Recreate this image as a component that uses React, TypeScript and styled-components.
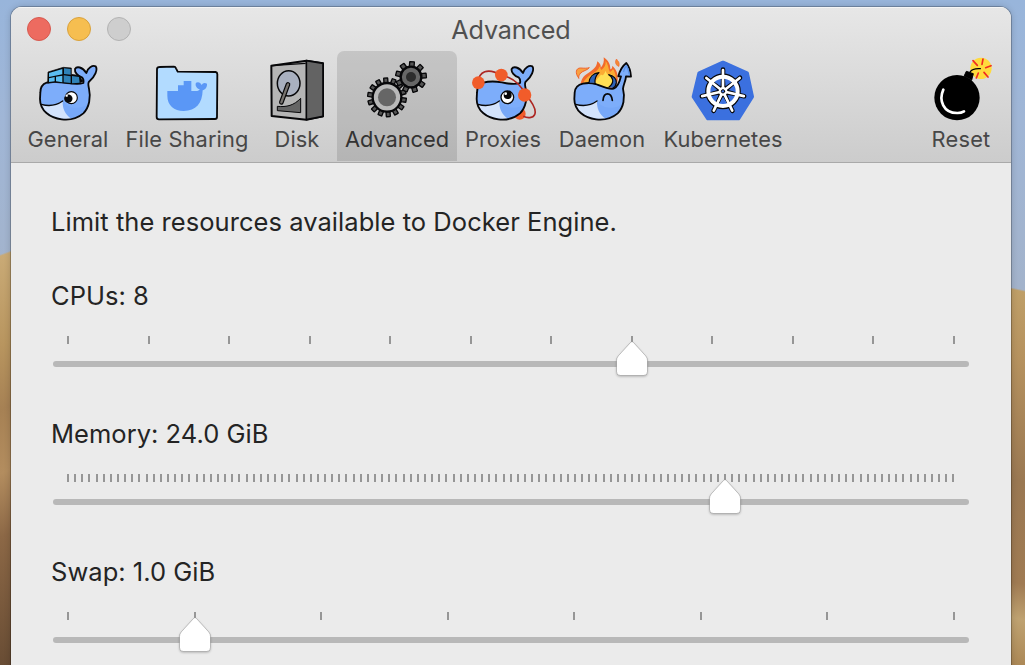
import React from 'react';
import styled, { createGlobalStyle } from 'styled-components';

const GlobalStyle = createGlobalStyle`
  body {
    margin: 0;
    overflow: hidden;
    font-family: Inter, 'Liberation Sans', sans-serif;
  }
`;

const Desktop = styled.div`
  box-sizing: border-box;
  width: 1025px;
  height: 665px;
  padding: 7px 14px 0 11px;
  overflow: hidden;
  background:
    linear-gradient(160deg, transparent 4px, #c9aa76 6px, #b8955f 90px, #a68154 150px, #b38d5f 210px, #8c6846 270px, #604630 420px) 0 250px / 11px 415px no-repeat,
    linear-gradient(192deg, transparent 2px, #bf9f68 4px, #b6925f 70px, #9a7852 190px, #a07b53 290px, #bfa271 325px, #ab8755 372px) 1011px 288px / 14px 377px no-repeat,
    linear-gradient(#98b5db, #a0b6d6 120px, #a3b3cb 290px);
`;

const Window = styled.main`
  height: 700px;
  display: flex;
  flex-direction: column;
  background: #ebebeb;
  border-radius: 11px 11px 0 0;
  box-shadow: 0 0 0 1px rgba(0, 0, 0, 0.22), 0 0 7px rgba(0, 0, 0, 0.2);
  overflow: hidden;
`;

const Header = styled.header`
  box-sizing: border-box;
  height: 156px;
  flex: none;
  display: flex;
  flex-direction: column;
  background: linear-gradient(#e7e7e7, #cccccc);
  border-bottom: 1px solid #a9a9a9;
  box-shadow: inset 0 1px 0 #f5f5f5;
`;

const TitleBar = styled.div`
  height: 44px;
  display: grid;
  grid-template-columns: 1fr auto 1fr;
  align-items: center;
  padding: 0 16px;
`;

const Lights = styled.div`
  display: flex;
  gap: 16px;
`;

const Light = styled.span<{ $fill: string; $edge: string }>`
  box-sizing: border-box;
  width: 24px;
  height: 24px;
  border-radius: 50%;
  background: ${(p) => p.$fill};
  border: 1px solid ${(p) => p.$edge};
`;

const Title = styled.h1`
  margin: 2px 0 0;
  font-size: 25.2px;
  line-height: 30px;
  font-weight: 420;
  letter-spacing: -0.15px;
  color: #505050;
`;

const Tools = styled.nav`
  display: flex;
  height: 110px;
  padding: 0 10px 0 8px;
`;

const Tool = styled.button<{ $width: number; $active?: boolean; $end?: boolean }>`
  width: ${(p) => p.$width}px;
  height: 110px;
  flex: none;
  margin: 0 0 0 ${(p) => (p.$end ? 'auto' : '0')};
  padding: 4px 0 0;
  border: 0;
  border-radius: 7px 7px 0 0;
  background: ${(p) => (p.$active ? 'rgba(0, 0, 0, 0.115)' : 'transparent')};
  color: ${(p) => (p.$active ? '#333' : '#474747')};
  font: inherit;
  display: flex;
  flex-direction: column;
  align-items: center;
`;

const Icon = styled.svg`
  display: block;
  width: 68px;
  height: 70px;
  flex: none;
`;

const ToolLabel = styled.span<{ $spacing: number }>`
  font-size: 21.8px;
  line-height: 28px;
  font-weight: 440;
  letter-spacing: ${(p) => p.$spacing}px;
  white-space: nowrap;
`;

const Content = styled.section`
  padding: 43px 40px 0;
  color: #242424;
  font-size: 25.5px;
  line-height: 32px;
  letter-spacing: 0.03px;
`;

const Intro = styled.p`
  margin: 0 0 42px;
  letter-spacing: 0.05px;
`;

const Setting = styled.div`
  height: 138px;
`;

const SettingLabel = styled.div`
  height: 56px;
`;

const Slider = styled.div`
  position: relative;
  width: 916px;
  margin-left: 2px;
`;

const Ticks = styled.div`
  display: flex;
  justify-content: space-between;
  height: 8px;
  padding: 0 14px;
`;

const Tick = styled.i`
  width: 2px;
  height: 8px;
  background: #969696;
`;

const Track = styled.div`
  height: 6px;
  margin-top: 17px;
  border-radius: 3px;
  background: #b8b8b8;
`;

const Thumb = styled.svg`
  position: absolute;
  top: 2px;
  width: 40px;
  height: 44px;
  margin-left: -20px;
`;

const INK = '#070709';

const WHALE_BACK = 'C273 292 268 322 250 340C230 357 208 361 185 358C150 354 120 332 120 297Z';
const FLUKED = `M121 278C121 262 128 252 140 248C158 243 178 244 196 247C213 251 234 255 250 249C252 240 250 236 246 232C233 229 223 216 225 207C230 198 247 200 259 219C262 203 278 195 287 199C294 208 285 231 267 245C263 250 265 257 267 266${WHALE_BACK}`;
const ARROWED = `M121 278C122 262 132 254 146 251C160 248 174 249 184 252C202 259 222 269 238 266C250 262 256 245 260 229L252 229C256 213 263 199 276 189C286 201 289 214 290 230L275 229C274 244 267 254 266 266${WHALE_BACK}`;

function Whale({ x = 0, y = 0, shape = FLUKED, children }: { x?: number; y?: number; shape?: string; children?: React.ReactNode }) {
  return (
    <g transform={`translate(${x} ${y})`} strokeLinejoin="round" strokeLinecap="round">
      <path d={shape} fill="#7dadfa" />
      <path d="M188 303C187 324 195 343 215 357C235 352 254 340 265 310C245 330 206 328 188 303Z" fill="#77a8f8" />
      <path d="M124 313C146 319 171 315 188 303C187 323 194 343 214 356C169 362 132 342 124 313Z" fill="#d3e3fc" />
      <path d={shape} fill="none" stroke={INK} strokeWidth="5.5" />
      <path d="M124 313C148 320 171 315 188 303" fill="none" stroke={INK} strokeWidth="4" />
      {children}
    </g>
  );
}

function GeneralIcon() {
  return (
    <Icon viewBox="102 165 204 210">
      <Whale>
        <circle cx="214" cy="293" r="18" fill="#fff" stroke={INK} strokeWidth="3.5" />
        <circle cx="205" cy="296" r="12.5" fill={INK} />
        <circle cx="200" cy="287" r="3.5" fill="#fff" />
        <path d="M143 249L144 216L190 202L214 204V223L240 227L244 237L250 243L239 250L205 251L164 247Z" fill={INK} stroke={INK} strokeWidth="2" />
        <path d="M147 219L187 207V223L147 231Z" fill="#5bbdf0" />
        <path d="M192 205L212 207V224L192 222Z" fill="#2f82b8" />
        <path d="M147 235L164 231V244L147 246ZM168 230L187 227V247L168 244Z" fill="#5bbdf0" />
        <path d="M191 226L212 229V249L191 247ZM216 228L237 231L239 248L216 250Z" fill="#2f82b8" />
      </Whale>
    </Icon>
  );
}

function FileSharingIcon() {
  return (
    <Icon viewBox="39 15 204 210">
      <path d="M51 57Q52 51 58 51L102 50Q106 50 108 55L113 65L227 66Q232 67 232 73L231 201Q231 207 225 207L57 208Q50 208 50 201Z" fill="#b2dbff" stroke={INK} strokeWidth="5.5" strokeLinejoin="round" />
      <path d="M82 123L114 123V106H131V93H154V123H172C176 122 179 120 179 118C171 115 164 107 168 98C175 94 182 98 185 105C188 98 195 97 201 101C202 112 195 119 188 121C187 160 168 183 131 183C102 182 82 166 82 137Z" fill="#5a97f6" />
    </Icon>
  );
}

function DiskIcon() {
  return (
    <Icon viewBox="369 15 204 210" strokeLinejoin="round">
      <path d="M394 47L499 32L549 40L549 199L499 209L395 198Z" fill="#b5b5b5" stroke={INK} strokeWidth="6" />
      <path d="M499 32L549 40V199L499 209Z" fill="#636363" stroke={INK} strokeWidth="5" />
      <path d="M394 47L497 40" fill="none" stroke={INK} strokeWidth="4" />
      <ellipse cx="446" cy="100" rx="34" ry="38" fill="#a9b0bf" stroke={INK} strokeWidth="4.5" />
      <path d="M412 169C440 172 462 166 482 145V188L412 182Z" fill="#656565" stroke={INK} strokeWidth="3" />
      <path d="M444 103L424 157" stroke={INK} strokeWidth="14" strokeLinecap="round" />
      <path d="M444 103L424 157" stroke="#77736f" strokeWidth="7" strokeLinecap="round" />
    </Icon>
  );
}

type GearProps = { cx: number; cy: number; r: number; teeth: number; rim: string; core: string; coreR: number; tooth: number; phase: number };

function Gear({ cx, cy, r, teeth, rim, core, coreR, tooth, phase }: GearProps) {
  return (
    <g transform={`translate(${cx} ${cy})`}>
      {Array.from({ length: teeth }, (_, i) => (
        <rect
          key={i} x={-tooth / 2} y={-r - 15} width={tooth} height={15} rx="1"
          transform={`rotate(${phase + (i * 360) / teeth})`}
          fill="#555" stroke={INK} strokeWidth="4"
        />
      ))}
      <circle r={r} fill={rim} stroke={INK} strokeWidth="7" />
      <circle r={coreR} fill={core} />
    </g>
  );
}

function AdvancedIcon() {
  return (
    <Icon viewBox="99 15 204 210">
      <Gear cx={171} cy={142} r={43} teeth={14} rim="#b9b9b9" core="#666" coreR={27} tooth={12} phase={-4} />
      <Gear cx={243} cy={81} r={31} teeth={9} rim="#676767" core="#2d2d2d" coreR={15} tooth={14} phase={4} />
    </Icon>
  );
}

function ProxiesIcon() {
  return (
    <Icon viewBox="417 15 204 210">
      <circle cx="569" cy="191" r="18" fill="#f15c2a" />
      <Whale x={320} y={-150}>
        <circle cx="212" cy="292" r="19" fill="#fff" stroke={INK} strokeWidth="4" />
        <circle cx="213" cy="285" r="12" fill={INK} />
        <circle cx="207" cy="281" r="4" fill="#fff" />
      </Whale>
      <path d="M444 97C447 65 472 52 513 75C548 82 573 105 588 135C611 162 620 180 614 194C609 205 592 205 580 199" fill="none" stroke="#ad2723" strokeWidth="5" />
      <circle cx="445" cy="98" r="19" fill="#f15c2a" />
      <circle cx="514" cy="75" r="19" fill="#f15c2a" />
      <circle cx="584" cy="135" r="20" fill="#f15c2a" />
    </Icon>
  );
}

function DaemonIcon() {
  return (
    <Icon viewBox="84 165 204 210" strokeLinejoin="round" strokeLinecap="round">
      <path d="M121 256C124 239 128 228 145 219C160 209 170 202 172 184C180 190 183 195 182 203C190 195 193 184 191 172C205 181 211 192 211 208C215 207 217 204 217 197C229 208 235 222 233 240C232 254 226 266 208 266H127Z" fill="#f26a2c" />
      <path d="M128 254C134 235 148 227 160 219C171 213 177 207 178 199L184 210C193 204 198 196 197 183C206 196 205 208 210 216C214 214 217 211 219 207C228 222 230 235 226 255L199 262Z" fill="#fbab33" />
      <path d="M162 256C166 240 178 233 183 223C187 230 193 222 197 212C201 227 208 226 214 221C222 238 220 256 207 264Z" fill="#ffdf55" />
      <path d="M116 234C104 219 108 204 121 204C133 205 142 205 148 203C142 211 129 212 122 219C118 224 115 229 116 234Z" fill="#f9a040" stroke="#f0642c" strokeWidth="3" />
      <path d="M233 198C225 191 225 183 230 177C232 184 240 184 237 198Z" fill="#f58a35" stroke="#f0642c" strokeWidth="2" />
      <Whale x={-17} shape={ARROWED}>
        <path d="M268 214C270 206 273 201 276 197C281 204 283 211 284 221" fill="none" stroke="#5c93e6" strokeWidth="4" />
        <path d="M206 301C208 275 231 275 234 301" fill="none" stroke={INK} strokeWidth="5" />
      </Whale>
      <path d="M147 248C148 232 159 220 177 218C167 227 164 237 165 248" fill="#2f63b8" stroke={INK} strokeWidth="3.5" />
      <path d="M207 261C215 255 219 247 218 240C217 233 212 227 206 224C221 227 230 237 229 248C228 256 225 261 219 264" fill="#2f63b8" stroke={INK} strokeWidth="3.5" />
    </Icon>
  );
}

const SPOKES = Array.from({ length: 7 }, (_, i) => (i * 360) / 7);

function KubernetesIcon() {
  return (
    <Icon viewBox="447 165 204 210">
      <path d="M549 188L621 220L636 290L595 355H504L461 290L478 220Z" fill="#3b70df" stroke="#3b70df" strokeWidth="12" strokeLinejoin="round" />
      <g transform="translate(549 274)" fill="none" strokeLinecap="round">
        <g stroke={INK}>
          <circle r="44" strokeWidth="19" />
          {SPOKES.map((a) => <path key={a} d="M0 -8V-65" strokeWidth="14" transform={`rotate(${a})`} />)}
        </g>
        {SPOKES.map((a) => <path key={a} d="M0 -14L14 -39A42 42 0 0 0 -14 -39Z" fill="#3b70df" stroke={INK} strokeWidth="3" transform={`rotate(${a + 180 / 7})`} />)}
        <g stroke="#fff">
          <circle r="44" strokeWidth="12" />
          {SPOKES.map((a) => <path key={a} d="M0 -10V-64" strokeWidth="8" transform={`rotate(${a})`} />)}
        </g>
        <circle r="13" fill="#fff" />
        <circle r="5" fill="#3b70df" stroke={INK} strokeWidth="3" />
      </g>
    </Icon>
  );
}

function ResetIcon() {
  return (
    <Icon viewBox="81 165 204 210" fill="none" strokeLinecap="round">
      <circle cx="243" cy="205" r="32" fill="#ffdb3d" />
      <path d="M219 182L232 196M249 177L246 193M257 203L273 197M252 217L264 231M235 219L229 234" stroke="#f02b22" strokeWidth="5" />
      <circle cx="171" cy="293" r="68" fill="#000" />
      <path d="M192 229L199 214L220 221L215 240Z" fill="#000" stroke="#000" strokeWidth="3" />
      <path d="M210 216C216 207 226 205 241 206" stroke="#000" strokeWidth="4" />
      <path d="M130 269C116 300 129 340 173 339C181 339 187 337 192 334" stroke="#fff" strokeWidth="8" />
    </Icon>
  );
}

const TOOLS = [
  { label: 'General', width: 98, spacing: 0.1, icon: GeneralIcon },
  { label: 'File Sharing', width: 140, spacing: 0.12, icon: FileSharingIcon },
  { label: 'Disk', width: 80, spacing: 0.1, icon: DiskIcon },
  { label: 'Advanced', width: 120, spacing: -0.05, icon: AdvancedIcon, active: true },
  { label: 'Proxies', width: 92, spacing: 0.05, icon: ProxiesIcon },
  { label: 'Daemon', width: 106, spacing: 0.1, icon: DaemonIcon },
  { label: 'Kubernetes', width: 136, spacing: 0.1, icon: KubernetesIcon },
  { label: 'Reset', width: 80, spacing: 0.2, icon: ResetIcon, end: true },
];

const SETTINGS = [
  { label: 'CPUs: 8', steps: 11, value: 7 },
  { label: 'Memory: 24.0 GiB', steps: 124, value: 92 },
  { label: 'Swap: 1.0 GiB', steps: 7, value: 1 },
];

export default function App() {
  return (
    <Desktop>
      <GlobalStyle />
      <Window>
        <Header>
          <TitleBar>
            <Lights>
              <Light $fill="#ed6b60" $edge="#d65a50" />
              <Light $fill="#f6be50" $edge="#d8a13d" />
              <Light $fill="#cecece" $edge="#b2b2b2" />
            </Lights>
            <Title>Advanced</Title>
          </TitleBar>
          <Tools>
            {TOOLS.map(({ label, width, spacing, icon: Glyph, active, end }) => (
              <Tool key={label} $width={width} $active={active} $end={end}>
                <Glyph />
                <ToolLabel $spacing={spacing}>{label}</ToolLabel>
              </Tool>
            ))}
          </Tools>
        </Header>
        <Content>
          <Intro>Limit the resources available to Docker Engine.</Intro>
          {SETTINGS.map(({ label, steps, value }) => (
            <Setting key={label}>
              <SettingLabel>{label}</SettingLabel>
              <Slider>
                <Ticks>
                  {Array.from({ length: steps + 1 }, (_, i) => <Tick key={i} />)}
                </Ticks>
                <Track />
                <Thumb viewBox="0 0 40 44" style={{ left: Math.round(14 + (886 * value) / steps) + 1 }}>
                  <path
                    d="M18.8 4.2Q20 2.9 21.2 4.2L33.6 17.8Q35.5 20 35.5 22.5V33.5Q35.5 37.5 31.5 37.5H8.5Q4.5 37.5 4.5 33.5V22.5Q4.5 20 6.4 17.8Z"
                    fill="#fff" stroke="rgba(0,0,0,0.2)" strokeWidth="1"
                    filter="drop-shadow(0 1px 1px rgba(0,0,0,0.25))"
                  />
                </Thumb>
              </Slider>
            </Setting>
          ))}
        </Content>
      </Window>
    </Desktop>
  );
}
